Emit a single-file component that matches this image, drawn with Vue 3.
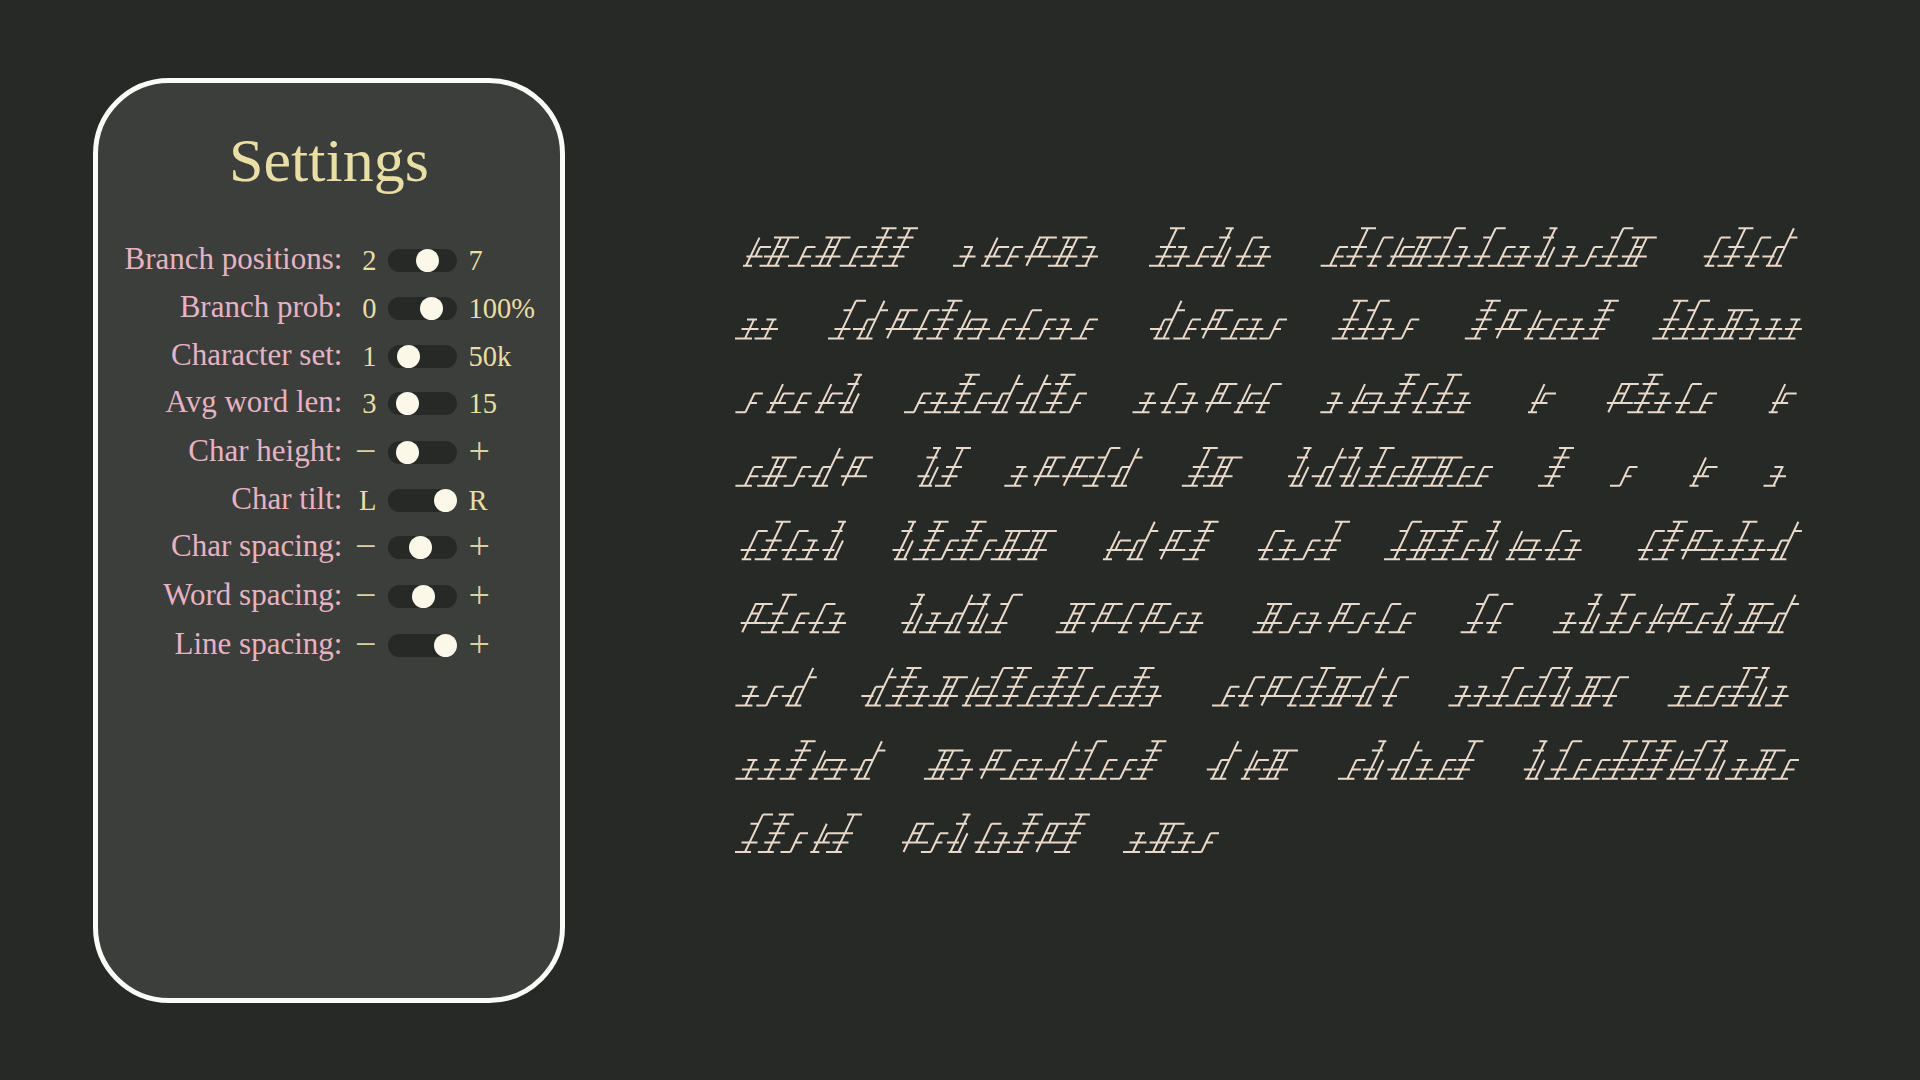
<script setup>
const settings = [
  { label: 'Branch positions:', min: '2', max: '7', knob: 27.7 },
  { label: 'Branch prob:', min: '0', max: '100%', knob: 32 },
  { label: 'Character set:', min: '1', max: '50k', knob: 8.3 },
  { label: 'Avg word len:', min: '3', max: '15', knob: 7.7 },
  { label: 'Char height:', min: '−', max: '+', knob: 7.7 },
  { label: 'Char tilt:', min: 'L', max: 'R', knob: 46 },
  { label: 'Char spacing:', min: '−', max: '+', knob: 21 },
  { label: 'Word spacing:', min: '−', max: '+', knob: 23.7 },
  { label: 'Line spacing:', min: '−', max: '+', knob: 46 }
]

const isSign = (v) => v === '−' || v === '+'

const LEVEL = 9.4
const TILT = 4.5

// Strokes of each generated mark, in unsheared units: stems [u, from, to], bars [level, u0, u1]
const marks = {
  a: { s: [[0, 0, 2]], b: [[0, -10, 7], [1, -8, 9], [2, -7, 3]] },
  b: { s: [[0, 0, 2]], b: [[0, -10, 0], [1, 0, 7], [2, 0, 8.5]] },
  c: { s: [[0, 0, 2]], b: [[0, -9.5, 7], [1, 0, 9], [2, 0, 9]] },
  d: { s: [[0, 0, 3], [5, 1, 2]], b: [[0, -3, 6], [1, -4, 12], [2, 5, 16]] },
  e: { s: [[0, 0, 2]], b: [[0, -10, 2], [1, -8, 8], [2, -8, 1]] },
  f: { s: [[0, 0, 3]], b: [[0, -2.5, 7], [1, -8, 7], [3, 0, 10]] },
  g: { s: [[0, 0, 4]], b: [[0, -10, 6], [1, -8, 8], [2, -8, 8], [4, -7, 8]] },
  h: { s: [[0, 0, 4]], b: [[0, -10, 6], [1, -8, 8], [2, -8, 8], [3, -8, 8], [4, -7, 8]] },
  i: { s: [[0, 0, 4]], b: [[0, -10, 6], [1, -8, 8], [3, -8, 0], [4, 0, 10]] },
  m: { s: [[0, 0, 2], [8, 0, 4]], b: [[0, -2, 14], [1, -10, 2], [2, 0, 8], [3, 8, 16]], w: 28 },
  n: { s: [[0, 0, 3], [8, 1, 3]], b: [[1, -6, 20], [2, 0, 8], [3, -1, 17]], w: 28 },
  o: { s: [[0, 0, 3], [8, 0, 3]], b: [[0, -8, 12], [1, -8, 17], [2, 0, 8], [3, -7, 18]], w: 28 },
  p: { s: [[0, 0, 4], [8, 0, 2]], b: [[0, -2, 11], [1, -8, 4], [3, -8, 3], [4, -6, 2]], w: 28 }
}

const lines = [
  [265.8, [[743, 918, 'docochh'], [953, 1098, 'edcnoe'], [1149, 1271, 'gecpfa'], [1320.6, 1656.8, 'cgfdoieicapebio'], [1703.7, 1797.4, 'fgfm']]],
  [338.4, [[735, 778, 'aa'], [828, 1098, 'imnfhdecfbec'], [1150, 1287, 'mcncab'], [1331.8, 1419.3, 'gieb'], [1464.8, 1618.8, 'hndcah'], [1652.3, 1801.9, 'giaoeaa']]],
  [412.3, [[735.4, 862, 'bdcdp'], [904, 1087, 'bahcmmhb'], [1132.5, 1281.8, 'afendf'], [1320.3, 1470.8, 'edehfga'], [1528, 1555.8, 'd'], [1606.8, 1717, 'nhafc'], [1768.7, 1796.9, 'd']]],
  [485.7, [[735.4, 872.9, 'cobmn'], [917.5, 971, 'pg'], [1004.3, 1142.5, 'annim'], [1181.8, 1242.5, 'go'], [1288, 1493, 'pmpgcoocc'], [1538, 1575.8, 'h'], [1610, 1637.8, 'b'], [1689.5, 1718.7, 'd'], [1763.5, 1785.9, 'e']]],
  [559.3, [[740.7, 846, 'fgfap'], [892.5, 1056.8, 'phbhboo'], [1103, 1218.6, 'dmnh'], [1257.9, 1350, 'fabg'], [1384, 1581.6, 'iohcpdafa'], [1637.8, 1801.9, 'fhnagam']]],
  [632.3, [[740.7, 846, 'ngcfa'], [901.4, 1022.9, 'pampi'], [1055.7, 1203.2, 'onfnba'], [1252.5, 1416, 'obenbfc'], [1460.6, 1513.3, 'if'], [1552.9, 1799, 'apgbdncpom']]],
  [705.5, [[735.4, 816.8, 'abm'], [861.4, 1161.4, 'mhaodihchgbche'], [1212, 1409, 'cfnfgomf'], [1448.4, 1629, 'eeicipof'], [1667.6, 1788.6, 'acbgpa']]],
  [778.8, [[735.4, 885.4, 'aahdam'], [923.9, 1166.4, 'oencamicbh'], [1206.8, 1298, 'mdo'], [1337.9, 1483.4, 'cpmacg'], [1523.8, 1799, 'piccgghdipaoc']]],
  [852, [[735, 862, 'ihbdg'], [902, 1090, 'nbpfehnh'], [1123, 1219, 'aoab']]]
]

function extent(mark) {
  const xs = [
    ...mark.s.flatMap(([u, a, b]) => [u + a * TILT, u + b * TILT]),
    ...mark.b.flatMap(([l, u0, u1]) => [u0 + l * TILT, u1 + l * TILT])
  ]
  return [Math.min(...xs), Math.max(...xs)]
}

function wordPath(y, left, right, codes) {
  const glyphs = [...codes].map((c) => marks[c])
  const pos = []
  let cursor = 0
  for (const g of glyphs) {
    pos.push(cursor)
    cursor += g.w || 20
  }
  const first = extent(glyphs[0])[0]
  const last = extent(glyphs[glyphs.length - 1])[1]
  const span = pos[pos.length - 1]
  const scale = span ? (right - left - (last - first)) / span : 1
  const origin = left - first
  let d = ''
  glyphs.forEach((g, i) => {
    const p = origin + pos[i] * scale
    for (const [u, a, b] of g.s) {
      d += `M${(p + u + a * TILT).toFixed(1)} ${(y - a * LEVEL).toFixed(1)}L${(p + u + b * TILT).toFixed(1)} ${(y - b * LEVEL).toFixed(1)}`
    }
    for (const [l, u0, u1] of g.b) {
      const yy = (y - l * LEVEL).toFixed(1)
      d += `M${(p + u0 + l * TILT).toFixed(1)} ${yy}L${(p + u1 + l * TILT).toFixed(1)} ${yy}`
    }
  })
  return d
}

const scriptPath = lines
  .map(([y, words]) => words.map(([l, r, c]) => wordPath(y, l, r, c)).join(''))
  .join('')
</script>

<template>
  <main class="page">
    <section class="panel">
      <h1 class="title">Settings</h1>
      <div class="rows">
        <div v-for="s in settings" :key="s.label" class="row">
          <span class="label">{{ s.label }}</span>
          <span class="min" :class="{ sign: isSign(s.min) }">{{ s.min }}</span>
          <span class="track"><span class="knob" :style="{ left: s.knob + 'px' }"></span></span>
          <span class="max" :class="{ sign: isSign(s.max) }">{{ s.max }}</span>
        </div>
      </div>
    </section>
    <svg class="script" viewBox="725 200 1100 680" width="1100" height="680" aria-hidden="true">
      <path :d="scriptPath" fill="none" stroke="#e8d9ca" stroke-width="2" />
    </svg>
  </main>
</template>

<style scoped>
.page {
  width: 1920px;
  height: 1080px;
  box-sizing: border-box;
  padding: 78px 0 0 93px;
  display: flex;
  align-items: flex-start;
  gap: 160px;
  background: #272927;
  overflow: hidden;
  font-family: "Liberation Serif", "Times New Roman", serif;
}
.panel {
  width: 472px;
  height: 925px;
  flex: none;
  box-sizing: border-box;
  border: 5.5px solid #fbfbf8;
  border-radius: 76px;
  background: #3c3e3b;
}
.title {
  margin: 0;
  padding-top: 46.5px;
  height: 166px;
  box-sizing: border-box;
  text-align: center;
  font-size: 62px;
  line-height: 60px;
  font-weight: 400;
  color: #e9dfa4;
}
.rows {
  display: grid;
  grid-template-columns: 244.4px 46px 69px auto;
  grid-template-rows: 48px 48px 47px 49px 48px 47px 49px 49px 48px;
  align-items: start;
  line-height: 23px;
}
.row {
  display: contents;
}
.label {
  margin-top: -2px;
  text-align: right;
  font-size: 31px;
  color: #e7b3c3;
  white-space: nowrap;
}
.min {
  padding-right: 12px;
  text-align: right;
  font-size: 28.5px;
  color: #e9dfa4;
}
.max {
  padding-left: 11px;
  font-size: 28.5px;
  color: #e9dfa4;
  white-space: nowrap;
}
.sign {
  margin-top: -1.5px;
  font-size: 38px;
  font-weight: 400;
  color: #dcd39b;
}
.track {
  position: relative;
  display: block;
  height: 23px;
  border-radius: 12px;
  background: #272927;
}
.knob {
  position: absolute;
  top: 0;
  width: 23px;
  height: 23px;
  border-radius: 50%;
  background: #fbf8ea;
}
.script {
  flex: none;
  margin-top: 122px;
}
</style>
